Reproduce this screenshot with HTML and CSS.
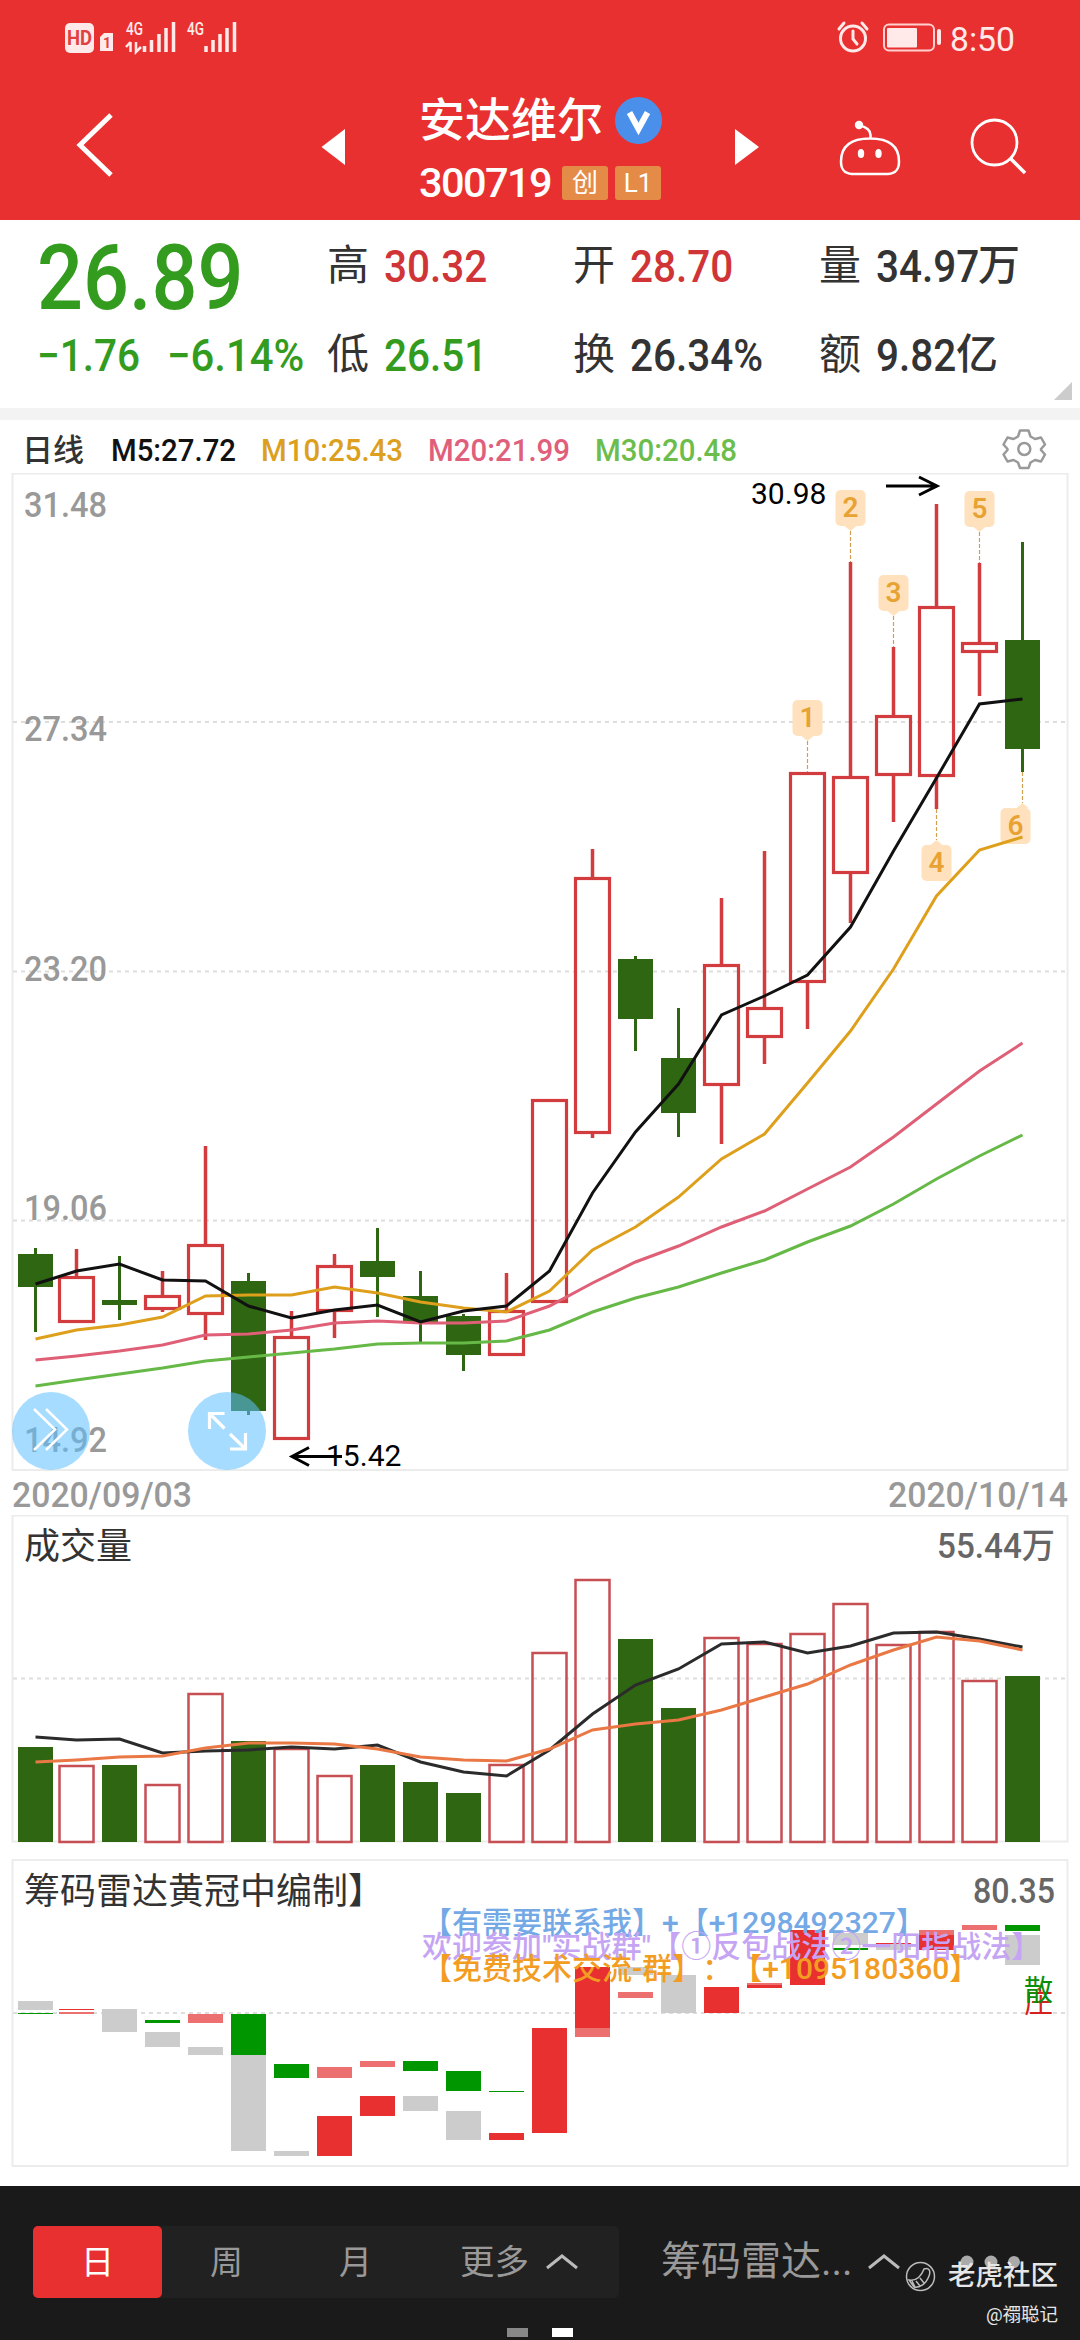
FILE: index.html
```html
<!DOCTYPE html>
<html lang="zh-CN">
<head>
    <meta charset="UTF-8">
    <meta name="viewport" content="width=device-width, initial-scale=1.0">
    <title>安达维尔 300719</title>
    <link rel="stylesheet" href="styles.css">
</head>
<body>
    <header class="header">
        <div class="status">
            <svg class="status-left" width="300" height="75" viewBox="0 0 300 75">
                <rect x="65" y="23" width="29" height="30" rx="5" fill="#ffe9e9"/>
                <text class="hd" x="67" y="45" textLength="25" lengthAdjust="spacingAndGlyphs">HD</text>
                <path d="M104 33h9v18h-13V37z" fill="#ffe9e9"/>
                <text class="sim" x="103" y="48">1</text>
                <text class="net" x="126" y="35" textLength="17" lengthAdjust="spacingAndGlyphs">4G</text>
                <path class="bars" d="M144.500 46v6M151.500 40v12M159 34v18M166 28v24M173.500 22v30"/>
                <path d="M130.500 42v10M126 47l4.500-5M136 42v10l5-5" fill="none" stroke="#ffe9e9" stroke-width="2.500"/>
                <text class="net" x="187" y="35" textLength="17" lengthAdjust="spacingAndGlyphs">4G</text>
                <path class="bars" d="M206 46v6M213 40v12M220 34v18M227 28v24M234.500 22v30"/>
            </svg>
            <svg class="status-right" width="300" height="75" viewBox="780 0 300 75">
                <g fill="none" stroke="#ffe9e9" stroke-width="3" stroke-linecap="round">
                    <circle cx="853" cy="38.500" r="12.500"/>
                    <path d="M853 31v8l4 5M839 29l5-6M867 29l-5-6"/>
                </g>
                <rect x="884" y="24.500" width="50" height="26" rx="5" fill="none" stroke="#ffd0d0" stroke-width="2"/>
                <rect x="887" y="28" width="30" height="19.500" rx="1" fill="#ffe9e9"/>
                <rect x="937" y="29" width="4" height="16" rx="2" fill="#ffe9e9"/>
                <text class="clock" x="950" y="50.500" textLength="65" lengthAdjust="spacingAndGlyphs">8:50</text>
            </svg>
        </div>
        <nav class="nav">
            <svg width="300" height="144" viewBox="0 75 300 144">
                <path d="M111 115L80 145L111 175" fill="none" stroke="#fff" stroke-width="5"/>
            </svg>
            <svg width="100" height="144" viewBox="300 75 100 144">
                <path d="M345 129V165L321.500 147z" fill="#fff"/>
            </svg>
            <div class="stock">
                <div class="stock-name">
                    <span>安达维尔</span>
                    <svg width="47" height="47" viewBox="0 0 47 47">
                        <circle cx="23.500" cy="23.500" r="23.500" fill="#4a90ea"/>
                        <path d="M14.500 15.500L23.500 32L32.500 15.500" fill="none" stroke="#fff" stroke-width="6"/>
                    </svg>
                </div>
                <div class="stock-code">
                    <span class="code">300719</span>
                    <span class="tag">创</span>
                    <span class="tag">L1</span>
                </div>
            </div>
            <svg width="120" height="144" viewBox="680 75 120 144">
                <path d="M735 129V165L759 147z" fill="#fff"/>
            </svg>
            <svg width="140" height="144" viewBox="800 75 140 144">
                <g fill="none" stroke="#fff" stroke-width="2.500">
                    <path d="M870 138.500c20 0 29 8 29 23 0 9-4 12-11 12.500h-36c-7-.5-11-3.500-11-12.500 0-15 9-23 29-23zM870.500 138v-3c0-5-4-8-11-9.500"/>
                </g>
                <circle cx="859" cy="125" r="4.200" fill="#fff"/>
                <ellipse cx="861" cy="153.500" rx="3.200" ry="4.500" fill="#fff"/>
                <ellipse cx="878.500" cy="153.500" rx="3.200" ry="4.500" fill="#fff"/>
            </svg>
            <svg width="140" height="144" viewBox="940 75 140 144">
                <circle cx="994.500" cy="142.500" r="22.500" fill="none" stroke="#fff" stroke-width="2.800"/>
                <path d="M1010.500 158.500L1025 173" stroke="#fff" stroke-width="3.500"/>
            </svg>
        </nav>
    </header>

    <section class="quote">
        <div class="price"><span class="num">26.89</span></div>
        <div class="cell first"><span>高</span><b class="num up">30.32</b></div>
        <div class="cell first"><span>开</span><b class="num up">28.70</b></div>
        <div class="cell first"><span>量</span><b class="num">34.97</b><i>万</i></div>
        <div class="change"><b class="num">−1.76</b><b class="num">−6.14%</b></div>
        <div class="cell"><span>低</span><b class="num down">26.51</b></div>
        <div class="cell"><span>换</span><b class="num">26.34%</b></div>
        <div class="cell"><span>额</span><b class="num short">9.82</b><i>亿</i></div>
        <svg class="corner" width="18" height="18"><path d="M18 0V18H0z" fill="#ccc"/></svg>
    </section>

    <section class="legend">
        <svg width="1080" height="53" viewBox="0 420 1080 53">
            <text class="t-day" x="22" y="461">日线</text>
            <text class="t-ma" x="111" y="461" textLength="125" lengthAdjust="spacingAndGlyphs" fill="#111">M5:27.72</text>
            <text class="t-ma" x="261" y="461" textLength="142" lengthAdjust="spacingAndGlyphs" fill="#dca01e">M10:25.43</text>
            <text class="t-ma" x="428" y="461" textLength="142" lengthAdjust="spacingAndGlyphs" fill="#e0607c">M20:21.99</text>
            <text class="t-ma" x="595" y="461" textLength="142" lengthAdjust="spacingAndGlyphs" fill="#6cbd4c">M30:20.48</text>
            <g fill="none" stroke="#999" stroke-width="2.500" stroke-linejoin="round">
                <path d="M1020 430.500h8.500l2 6 4.500 2.500 6-1.500 4 7-4 4.500v1l4 4.500-4 7-6-1.500-4.500 2.500-2 5.500h-8.500l-2-5.500-4.500-2.500-6 1.500-4-7 4-4.500v-1l-4-4.500 4-7 6 1.500 4.500-2.500z"/>
                <circle cx="1024.300" cy="449" r="6"/>
            </g>
        </svg>
    </section>

    <svg class="chart" width="1080" height="999" viewBox="0 473 1080 999">
        <rect class="frame" x="12.500" y="473.500" width="1055" height="996.500"/>
        <path class="grid" d="M13 722H1067M13 971.500H1067M13 1220.500H1067"/>
        <g class="t-axis">
            <text x="24" y="516.500" textLength="83" lengthAdjust="spacingAndGlyphs">31.48</text>
            <text x="24" y="740.500" textLength="83" lengthAdjust="spacingAndGlyphs">27.34</text>
            <text x="24" y="980.500" textLength="83" lengthAdjust="spacingAndGlyphs">23.20</text>
            <text x="24" y="1220" textLength="83" lengthAdjust="spacingAndGlyphs">19.06</text>
            <text x="24" y="1452" textLength="83" lengthAdjust="spacingAndGlyphs">14.92</text>
        </g>
        <g id="candles"></g>
        <g id="marks"></g>
        <g id="averages" class="line"></g>
        <g fill="none" stroke="#000" stroke-width="3">
            <path d="M886 486H936M919 477L937 486L919 495"/>
            <path d="M342 1456.500H293M309 1447.500L292 1456.500L309 1465.500"/>
        </g>
        <text class="t-peak" x="751" y="504">30.98</text>
        <text class="t-peak" x="326" y="1466">15.42</text>
        <g fill="none" stroke="#fff">
            <circle class="float" cx="51" cy="1431" r="39"/>
            <path d="M34 1409L55 1429.500L34 1450M46 1409L67 1429.500L46 1450" stroke-width="2.500"/>
            <circle class="float" cx="227" cy="1431" r="39"/>
            <path d="M209.500 1429V1413.500H224.500M210 1414L224.500 1428.500M245.500 1433V1449H230M245 1448.500L230 1434" stroke-width="3.200"/>
        </g>
    </svg>

    <svg class="chart" width="1080" height="43" viewBox="0 1472 1080 43">
        <text class="t-date" x="12" y="1507" textLength="180" lengthAdjust="spacingAndGlyphs">2020/09/03</text>
        <text class="t-date" x="888" y="1507" textLength="180" lengthAdjust="spacingAndGlyphs">2020/10/14</text>
    </svg>

    <svg class="chart" width="1080" height="344" viewBox="0 1515 1080 344">
        <rect class="frame" x="12.500" y="1515.500" width="1055" height="326"/>
        <path class="grid" d="M13 1678.500H1067"/>
        <text class="t-name" x="24" y="1558.500">成交量</text>
        <text class="t-value" x="937" y="1558" textLength="118" lengthAdjust="spacingAndGlyphs">55.44万</text>
        <g id="volumes"></g>
        <g id="volume-averages" class="line"></g>
    </svg>

    <svg class="chart" width="1080" height="327" viewBox="0 1859 1080 327">
        <rect class="frame" x="12.500" y="1860" width="1055" height="306"/>
        <path class="grid" d="M13 2013H1067"/>
        <text class="t-name" x="24" y="1903.500">筹码雷达黄冠中编制】</text>
        <text class="t-value" x="973" y="1903" textLength="82" lengthAdjust="spacingAndGlyphs">80.35</text>
        <g id="radar"></g>
        <text class="t-note" x="422" y="1933" fill="#74a9e6">【有需要联系我】+【+1298492327】</text>
        <text class="t-note" x="422" y="1956.500" fill="#c5a5f3">欢迎参加"实战群"【①反包战法②一阳指战法】</text>
        <text class="t-note" x="422" y="1979" fill="#f29d22">【免费技术交流-群】：【+1095180360】</text>
        <text class="t-flag" x="1024" y="2013" fill="#d62020">庄</text>
        <text class="t-flag" x="1024" y="2001" fill="#0a8f0a">散</text>
    </svg>

    <footer class="footer">
        <div class="toolbar">
            <div class="periods">
                <span class="period active">日</span>
                <span class="period">周</span>
                <span class="period">月</span>
                <span class="period more">更多
                    <svg width="34" height="16"><path d="M2 14L17 2L32 14" fill="none" stroke="#bbb" stroke-width="3"/></svg>
                </span>
            </div>
            <div class="indicator"><span>筹码雷达...</span>
                <svg width="34" height="16"><path d="M2 14L17 2L32 14" fill="none" stroke="#bbb" stroke-width="3"/></svg>
            </div>
            <svg class="dots" width="60" height="14"><g fill="#aaa"><circle cx="7" cy="7" r="6.500"/><circle cx="31" cy="7" r="6.500"/><circle cx="54" cy="7" r="6"/></g></svg>
        </div>
        <div class="pager"><i></i><i class="on"></i></div>
        <div class="watermark">
            <div class="community">
                <svg width="31" height="31" viewBox="0 0 31 31" fill="none" stroke="#bbb" stroke-width="1.500">
                    <circle cx="15.500" cy="15.500" r="14"/>
                    <path d="M19 8c5-2 7 2 5 7-3 8-9 12-15 11l-5-7c7 1 12-3 15-11zM7 20l3 6M11 20l4 5M15 17l4 5"/>
                </svg>
                <span>老虎社区</span>
            </div>
            <div class="author">@禤聪记</div>
        </div>
    </footer>

    <script>
        const RED = '#d23c3f';
        const GREEN = '#2f6612';

        // x centre of each trading day
        const cx = i => i === 0 ? 35.5 : 33.5 + 43 * i;

        // [rising, high, body top, body bottom, low]
        const candles = [
            [0, 1248, 1254, 1287, 1332], [1, 1249, 1276, 1323, 1323], [0, 1256, 1300, 1305, 1320],
            [1, 1271, 1295, 1310, 1312], [1, 1146, 1244, 1315, 1340], [0, 1273, 1281, 1411, 1415],
            [1, 1311, 1336, 1440, 1440], [1, 1254, 1265, 1312, 1338], [0, 1228, 1261, 1277, 1317],
            [0, 1271, 1296, 1322, 1342], [0, 1314, 1316, 1355, 1371], [1, 1273, 1310, 1356, 1356],
            [1, 1099, 1099, 1303, 1303], [1, 849, 877, 1134, 1138], [0, 956, 959, 1019, 1051],
            [0, 1008, 1058, 1113, 1137], [1, 898, 964, 1086, 1144], [1, 851, 1007, 1038, 1064],
            [1, 772, 772, 983, 1029], [1, 562, 776, 874, 923], [1, 647, 715, 776, 822],
            [1, 504, 606, 777, 809], [1, 563, 642, 653, 696], [0, 542, 640, 749, 772]
        ];

        const averages = [
            ['#66b946', [1386, 1380, 1374, 1368, 1361, 1357, 1353, 1349, 1344, 1343, 1343, 1341, 1330, 1312, 1298, 1287, 1273, 1260, 1242, 1226, 1204, 1179, 1156, 1135]],
            ['#df5f76', [1360, 1356, 1351, 1345, 1335, 1334, 1330, 1323, 1321, 1323, 1323, 1321, 1306, 1283, 1262, 1246, 1227, 1211, 1189, 1167, 1137, 1104, 1071, 1043]],
            ['#dea01c', [1339, 1330, 1325, 1317, 1296, 1295, 1295, 1287, 1293, 1302, 1308, 1312, 1291, 1250, 1227, 1197, 1159, 1134, 1083, 1031, 969, 896, 850, 837]],
            ['#111', [1284, 1271, 1264, 1280, 1281, 1306, 1318, 1310, 1305, 1322, 1311, 1306, 1271, 1193, 1132, 1084, 1015, 996, 975, 927, 851, 778, 704, 699]]
        ];

        const volumes = [1747, 1765, 1765, 1784, 1693, 1741, 1748, 1775, 1765, 1782, 1793, 1764,
            1652, 1579, 1639, 1708, 1637, 1643, 1633, 1603, 1644, 1631, 1680, 1676];

        const volumeAverages = [
            ['#2b2b2b', [1737, 1740, 1739, 1753, 1751, 1750, 1747, 1749, 1745, 1762, 1772, 1776, 1750, 1714, 1685, 1669, 1644, 1642, 1653, 1646, 1633, 1632, 1639, 1647]],
            ['#ea7845', [1762, 1760, 1757, 1756, 1748, 1743, 1743, 1744, 1749, 1757, 1760, 1761, 1749, 1730, 1724, 1720, 1710, 1697, 1684, 1665, 1650, 1637, 1641, 1650]]
        ];

        // [day, top, bottom, kind]
        const radar = [
            [0, 2001, 2010, 'n'], [0, 2013, 2014, 'g'], [1, 2009, 2010, 'r'], [1, 2012, 2014, 'p'],
            [2, 2009, 2032, 'n'], [3, 2020, 2023, 'g'], [3, 2032, 2047, 'n'], [4, 2014, 2023, 'p'],
            [4, 2047, 2055, 'n'], [5, 2014, 2055, 'g'], [5, 2055, 2151, 'n'], [6, 2064, 2078, 'g'],
            [6, 2151, 2156, 'n'], [7, 2067, 2078, 'p'], [7, 2116, 2156, 'r'], [8, 2061, 2067, 'p'],
            [8, 2096, 2116, 'r'], [9, 2061, 2071, 'g'], [9, 2096, 2111, 'n'], [10, 2071, 2091, 'g'],
            [10, 2111, 2140, 'n'], [11, 2091, 2092, 'g'], [11, 2133, 2140, 'r'], [12, 2028, 2133, 'r'],
            [13, 1967, 2028, 'r'], [13, 2028, 2037, 'p'], [14, 1967, 1975, 'n'], [14, 1992, 1998, 'p'],
            [15, 1975, 2013, 'n'], [16, 1987, 2013, 'r'], [17, 1983, 1985, 'p'], [17, 1985, 1988, 'r'],
            [18, 1930, 1985, 'r'], [19, 1933, 1945, 'n'], [19, 1948, 1950, 'g'], [20, 1943, 1944, 'r'],
            [20, 1944, 1950, 'n'], [21, 1930, 1950, 'r'], [21, 1930, 1935, 'p'], [22, 1925, 1930, 'p'],
            [23, 1925, 1931, 'g'], [23, 1935, 1965, 'n']
        ];
        const kinds = { n: '#ccc', g: '#009600', r: '#e83030', p: '#ec7070' };

        // [label, day, box top, box left, points up]
        const marks = [[1, 18, 700, 792.5, 0], [2, 19, 490, 835.5, 0], [3, 20, 575, 878.5, 0],
            [4, 21, 845, 921.5, 1], [5, 22, 491, 964.5, 0], [6, 23, 808, 1000.5, 1]];

        const put = (id, html) => document.getElementById(id).innerHTML = html;

        const polyline = ([color, ys]) =>
            `<polyline stroke="${color}" points="${ys.map((y, i) => cx(i) + ',' + y).join(' ')}"/>`;

        put('candles', candles.map(([up, high, top, bottom, low], i) => {
            const x = cx(i);
            if (!up) {
                return `<path d="M${x} ${high}V${low}" stroke="${GREEN}" stroke-width="3"/>
                    <rect x="${x - 17.5}" y="${top}" width="35" height="${bottom - top}" fill="${GREEN}"/>`;
            }
            return `<path d="M${x} ${high}V${top}M${x} ${bottom}V${low}" stroke="${RED}" stroke-width="3.5"/>
                <rect x="${x - 17}" y="${top + 1.5}" width="34" height="${bottom - top - 3}" fill="none" stroke="${RED}" stroke-width="3.2"/>`;
        }).join(''));

        put('marks', marks.map(([label, day, top, left, below]) => {
            const x = cx(day);
            const c = candles[day];
            const line = below ? `M${x} ${c[4]}V${top - 5}` : `M${x} ${top + 41}V${c[1]}`;
            const tip = below ? `M${x - 6} ${top}l6-5 6 5z` : `M${x - 6} ${top + 36}l6 5 6-5z`;
            return `<path class="mark-line" d="${line}"/><path class="mark" d="${tip}"/>
                <rect class="mark" x="${left}" y="${top}" width="30" height="36" rx="5"/>
                <text class="t-mark" x="${left + 15}" y="${top + 27}">${label}</text>`;
        }).join(''));

        put('averages', averages.map(polyline).join(''));

        put('volumes', volumes.map((top, i) => candles[i][0]
            ? `<rect x="${cx(i) - 17}" y="${top + 1}" width="34" height="${1841 - top}" fill="none" stroke="#c64f54" stroke-width="2.5"/>`
            : `<rect x="${cx(i) - 17.5}" y="${top}" width="35" height="${1842 - top}" fill="${GREEN}"/>`
        ).join(''));

        put('volume-averages', volumeAverages.map(polyline).join(''));

        put('radar', radar.map(([i, top, bottom, kind]) =>
            `<rect x="${cx(i) - 17.5}" y="${top}" width="35" height="${bottom - top}" fill="${kinds[kind]}"/>`
        ).join(''));
    </script>
</body>
</html>
```

FILE: styles.css
```css
body {
    width: 1080px;
    height: 2340px;
    margin: 0;
    overflow: hidden;
    background-color: #fff;
    color: #333;
    font-family: Roboto, "Noto Sans CJK SC", sans-serif;
    text-spacing-trim: space-all;
}

svg {
    display: block;
    flex: none;
}

.header {
    height: 220px;
    background-color: #e83030;
}

.status {
    display: flex;
    justify-content: space-between;
    height: 75px;
}

.hd {
    font-size: 21px;
    font-weight: 700;
    fill: #e04040;
}

.sim {
    font-size: 14px;
    font-weight: 700;
    fill: #e04040;
}

.net {
    font-size: 18px;
    font-weight: 500;
    fill: #ffe9e9;
}

.bars {
    stroke: #ffe9e9;
    stroke-width: 3.5;
}

.clock {
    font-size: 34px;
    fill: #ffe9e9;
}

.nav {
    display: flex;
    height: 144px;
}

.stock {
    display: flex;
    flex-direction: column;
    width: 261px;
    padding: 15px 0 0 19px;
    color: #fff;
}

.stock-name {
    display: flex;
    align-items: center;
    gap: 12px;
    height: 60px;
    font-size: 46px;
    font-weight: 500;
    line-height: 60px;
}

.stock-code {
    display: flex;
    align-items: center;
    gap: 7px;
    height: 34px;
    margin-top: 16px;
}

.code {
    width: 136px;
    font-size: 41.5px;
    font-weight: 500;
    line-height: 34px;
    letter-spacing: -1.6px;
}

.tag {
    width: 46px;
    height: 34px;
    border-radius: 3px;
    background-color: #e58b48;
    font-size: 26px;
    line-height: 34px;
    text-align: center;
}

.quote {
    position: relative;
    display: grid;
    grid-template-columns: 327px 246px 246px 261px;
    grid-template-rows: 92px 88px;
    height: 188px;
    border-bottom: 12px solid #f3f3f3;
}

.num {
    display: inline-block;
    font-weight: 500;
    transform: scaleX(0.9);
    transform-origin: left;
    white-space: nowrap;
}

.price {
    padding-left: 37px;
    color: #339b1e;
    font-size: 91px;
    line-height: 116px;
}

.price .num {
    transform: scaleX(0.89);
}

.change {
    display: flex;
    padding: 2px 0 0 37px;
    color: #339b1e;
    font-size: 45px;
    line-height: 84px;
}

.change .num {
    width: 130px;
}

.change .num + .num {
    transform: scaleX(0.93);
}

.cell {
    display: flex;
    padding-top: 2px;
    font-size: 45px;
    line-height: 84px;
}

.first {
    padding-top: 5px;
}

.cell span {
    width: 57px;
    font-size: 42px;
    line-height: 82px;
}

.cell .num {
    width: 102px;
}

.cell .short {
    width: 80px;
}

.cell i {
    font-size: 42px;
    font-style: normal;
    font-weight: 500;
    line-height: 82px;
}

.up {
    color: #d03437;
}

.down {
    color: #339b1e;
}

.corner {
    position: absolute;
    right: 8px;
    bottom: 8px;
}

.t-day {
    font-size: 31px;
    font-weight: 500;
    fill: #333;
}

.t-ma {
    font-size: 32px;
    font-weight: 500;
}

.frame {
    fill: none;
    stroke: #ececec;
    stroke-width: 2;
}

.grid {
    fill: none;
    stroke: #ddd;
    stroke-width: 2;
    stroke-dasharray: 4 4;
}

.t-axis,
.t-date {
    font-size: 35px;
    font-weight: 500;
    fill: #999;
}

.line {
    fill: none;
    stroke-width: 3;
}

.mark {
    fill: #ffe2bd;
}

.mark-line {
    stroke: #d0a050;
    stroke-width: 1.2;
    stroke-dasharray: 4 2;
}

.t-mark {
    font-size: 28px;
    font-weight: 600;
    text-anchor: middle;
    fill: #e8a233;
}

.t-peak {
    font-size: 30px;
    fill: #000;
}

.float {
    fill: rgba(93, 191, 255, 0.55);
    stroke: none;
}

.t-name {
    font-size: 36px;
    fill: #333;
}

.t-value {
    font-size: 35px;
    font-weight: 500;
    fill: #666;
}

.t-note {
    font-size: 30px;
    font-weight: 500;
}

.t-flag {
    font-size: 29px;
}

.footer {
    position: relative;
    height: 154px;
    background-color: #1a1a1a;
    color: #999;
}

.toolbar {
    display: flex;
    align-items: center;
    height: 72px;
    padding: 40px 0 0 33px;
}

.periods {
    display: flex;
    width: 586px;
    height: 72px;
    border-radius: 5px;
    background-color: #212121;
}

.period {
    width: 129px;
    font-size: 33px;
    line-height: 74px;
    text-align: center;
}

.active {
    border-radius: 5px;
    background-color: #e83030;
    color: #fff;
}

.more {
    display: flex;
    align-items: center;
    gap: 16px;
    width: 158px;
    padding-left: 40px;
    font-size: 34.5px;
}

.indicator {
    display: flex;
    align-items: center;
    justify-content: space-between;
    width: 240px;
    margin-left: 42px;
    font-size: 40px;
    line-height: 74px;
    white-space: nowrap;
}

.dots {
    margin: 0 0 0 59px;
}

.pager {
    display: flex;
    gap: 24px;
    padding: 30px 0 0 507px;
}

.pager i {
    width: 21px;
    height: 9px;
    background-color: #888;
}

.pager .on {
    background-color: #fff;
}

.watermark {
    position: absolute;
    right: 22px;
    bottom: 10px;
    color: #e6e6e6;
    text-align: right;
}

.community {
    display: flex;
    align-items: center;
    gap: 12px;
    font-size: 27.5px;
    font-weight: 500;
    line-height: 40px;
}

.author {
    margin-top: 4px;
    font-size: 18.5px;
    line-height: 30px;
}
```
